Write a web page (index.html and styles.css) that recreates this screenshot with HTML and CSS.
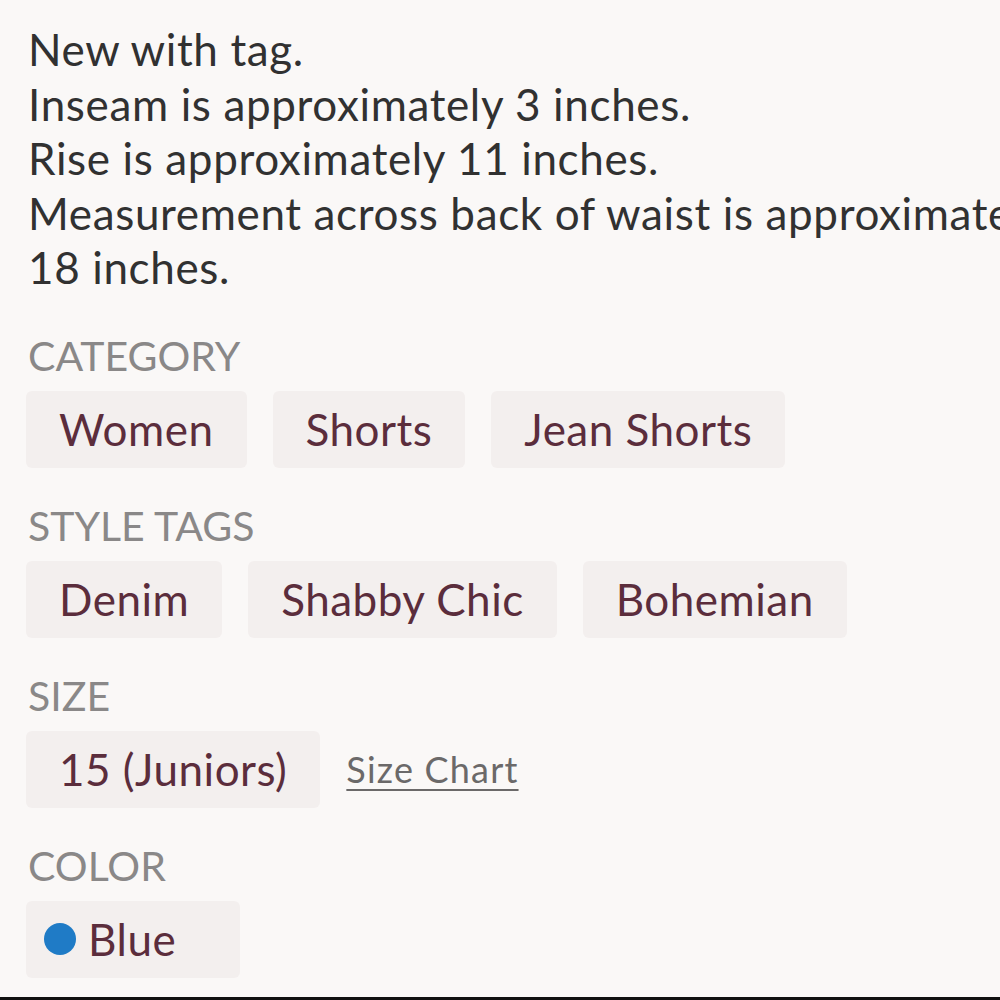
FILE: index.html
```html
<!DOCTYPE html>
<html>
<head>
<meta charset="utf-8">
<link rel="stylesheet" href="styles.css">
</head>
<body>
<div class="page">
  <div class="desc">
    <div class="line">New with tag.</div>
    <div class="line">Inseam is approximately 3 inches.</div>
    <div class="line">Rise is approximately 11 inches.</div>
    <div class="line">Measurement across back of waist is approximately</div>
    <div class="line">18 inches.</div>
  </div>

  <section class="section sec-category">
    <div class="label">CATEGORY</div>
    <div class="chips">
      <span class="chip">Women</span>
      <span class="chip">Shorts</span>
      <span class="chip">Jean Shorts</span>
    </div>
  </section>

  <section class="section">
    <div class="label">STYLE TAGS</div>
    <div class="chips">
      <span class="chip">Denim</span>
      <span class="chip">Shabby Chic</span>
      <span class="chip">Bohemian</span>
    </div>
  </section>

  <section class="section">
    <div class="label">SIZE</div>
    <div class="chips">
      <span class="chip">15 (Juniors)</span>
      <a class="size-chart">Size Chart</a>
    </div>
  </section>

  <section class="section">
    <div class="label">COLOR</div>
    <div class="chips">
      <span class="chip chip-color"><span class="dot"></span>Blue</span>
    </div>
  </section>
</div>
<div class="bottom-bar"></div>
</body>
</html>
```

FILE: styles.css
```css
html, body {
  margin: 0;
  padding: 0;
  background: #faf8f7;
  width: 1000px;
  height: 1000px;
  overflow: hidden;
}

body {
  font-family: Lato, "Noto Sans", sans-serif;
  position: relative;
}

.page {
  padding: 22px 0 0 28px;
  display: flex;
  flex-direction: column;
}

.desc {
  color: #313131;
  font-size: 44px;
  line-height: 54.5px;
  letter-spacing: 0.64px;
  white-space: nowrap;
}

.section {
  display: flex;
  flex-direction: column;
  margin-top: 35px;
}

.sec-category {
  margin-top: 38px;
}

.label {
  color: #8a8888;
  font-size: 41px;
  line-height: 46px;
  margin-bottom: 12px;
}

.chips {
  display: flex;
  align-items: center;
  gap: 26px;
  margin-left: -2px;
}

.chip {
  display: inline-flex;
  align-items: center;
  height: 77px;
  padding: 0 33px;
  background: #f3efee;
  border-radius: 6px;
  color: #5b2d3c;
  font-size: 44px;
  letter-spacing: 0.5px;
  white-space: nowrap;
}

.chip-color {
  width: 214px;
  box-sizing: border-box;
  padding: 0 0 0 18px;
  gap: 12px;
}

.dot {
  width: 32px;
  height: 32px;
  border-radius: 50%;
  background: #1f7bc6;
  flex: none;
}

.size-chart {
  color: #6b6969;
  font-size: 36px;
  letter-spacing: 1.2px;
  text-decoration: underline;
  text-underline-offset: 6px;
  text-decoration-thickness: 2px;
}

.bottom-bar {
  position: absolute;
  left: 0;
  right: 0;
  bottom: 0;
  height: 3px;
  background: #111111;
}
```
